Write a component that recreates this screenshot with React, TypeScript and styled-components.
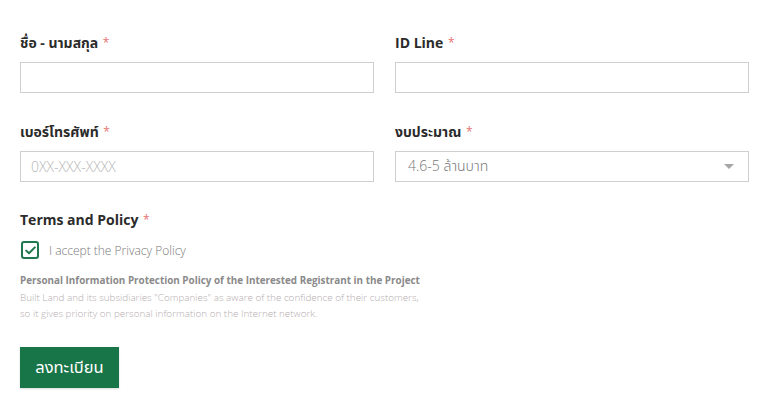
import React from 'react'
import styled, { createGlobalStyle } from 'styled-components'

const GlobalStyle = createGlobalStyle`
  body {
    margin: 0;
    background: #ffffff;
    font-family: 'Open Sans', 'Noto Sans', 'Noto Sans Thai', sans-serif;
    color: #333333;
  }
`

const Form = styled.form`
  padding: 33px 19px 20px 20px;
`

const Grid = styled.div`
  display: grid;
  grid-template-columns: 1fr 1fr;
  column-gap: 21px;
  row-gap: 29px;
`

const Field = styled.div`
  display: flex;
  flex-direction: column;
`

const Label = styled.label`
  font-size: 14px;
  font-weight: 700;
  line-height: 20px;
  color: #2b2b2b;
  margin-bottom: 9px;
`

const Star = styled.span`
  color: #e57373;
  font-size: 12px;
  font-weight: 400;
  margin-left: 1px;
  vertical-align: 1px;
`

const Input = styled.input`
  box-sizing: border-box;
  height: 31px;
  width: 100%;
  border: 1px solid #cfcfcf;
  padding: 0 10px;
  font-family: inherit;
  font-size: 14px;
  font-weight: 300;
  color: #555555;
  outline: none;
  &::placeholder {
    color: #b5b5b5;
  }
`

const SelectBox = styled.div`
  box-sizing: border-box;
  height: 31px;
  border: 1px solid #cfcfcf;
  padding: 0 12px;
  display: flex;
  align-items: center;
  justify-content: space-between;
  font-size: 14px;
  font-weight: 300;
  color: #777777;
`

const Caret = styled.span`
  width: 0;
  height: 0;
  border-left: 5px solid transparent;
  border-right: 5px solid transparent;
  border-top: 5px solid #a6a6a6;
  margin-right: 2px;
`

const Terms = styled.div`
  margin-top: 28px;
  display: flex;
  flex-direction: column;
`

const CheckRow = styled.div`
  display: flex;
  align-items: center;
  gap: 10px;
  margin-top: 2px;
`

const CheckBox = styled.span`
  box-sizing: border-box;
  width: 18px;
  height: 18px;
  border: 2px solid #1e7a4c;
  border-radius: 3px;
  display: flex;
  align-items: center;
  justify-content: center;
  margin-left: 1px;
`

const CheckText = styled.span`
  font-size: 12px;
  font-weight: 300;
  color: #7a7a7a;
`

const Policy = styled.div`
  margin-top: 13px;
  font-size: 9.9px;
  line-height: 16.5px;
  color: #b5adaf;
  font-weight: 300;
`

const PolicyTitle = styled.div`
  font-weight: 700;
  color: #8a8a8a;
`

const Submit = styled.button`
  margin-top: 25px;
  width: 99px;
  height: 41px;
  border: 0;
  background: #187548;
  color: #ffffff;
  font-family: inherit;
  font-size: 16.5px;
  font-weight: 400;
  cursor: pointer;
  box-shadow: 0 1px 2px rgba(0, 0, 0, 0.15);
`

export default function App() {
  return (
    <>
      <GlobalStyle />
      <Form onSubmit={(e) => e.preventDefault()}>
        <Grid>
          <Field>
            <Label>
              ชื่อ - นามสกุล <Star>*</Star>
            </Label>
            <Input />
          </Field>
          <Field>
            <Label>
              ID Line <Star>*</Star>
            </Label>
            <Input />
          </Field>
          <Field>
            <Label>
              เบอร์โทรศัพท์ <Star>*</Star>
            </Label>
            <Input placeholder="0XX-XXX-XXXX" />
          </Field>
          <Field>
            <Label>
              งบประมาณ <Star>*</Star>
            </Label>
            <SelectBox>
              <span>4.6-5 ล้านบาท</span>
              <Caret />
            </SelectBox>
          </Field>
        </Grid>
        <Terms>
          <Label>
            Terms and Policy <Star>*</Star>
          </Label>
          <CheckRow>
            <CheckBox>
              <svg width="11" height="9" viewBox="0 0 11 9">
                <path d="M1.2 4.6 L4 7.3 L9.8 1.4" fill="none" stroke="#1e7a4c" strokeWidth="2" strokeLinecap="round" strokeLinejoin="round" />
              </svg>
            </CheckBox>
            <CheckText>I accept the Privacy Policy</CheckText>
          </CheckRow>
          <Policy>
            <PolicyTitle>Personal Information Protection Policy of the Interested Registrant in the Project</PolicyTitle>
            <div>Built Land and its subsidiaries "Companies" as aware of the confidence of their customers,</div>
            <div>so it gives priority on personal information on the Internet network.</div>
          </Policy>
        </Terms>
        <Submit type="submit">ลงทะเบียน</Submit>
      </Form>
    </>
  )
}
